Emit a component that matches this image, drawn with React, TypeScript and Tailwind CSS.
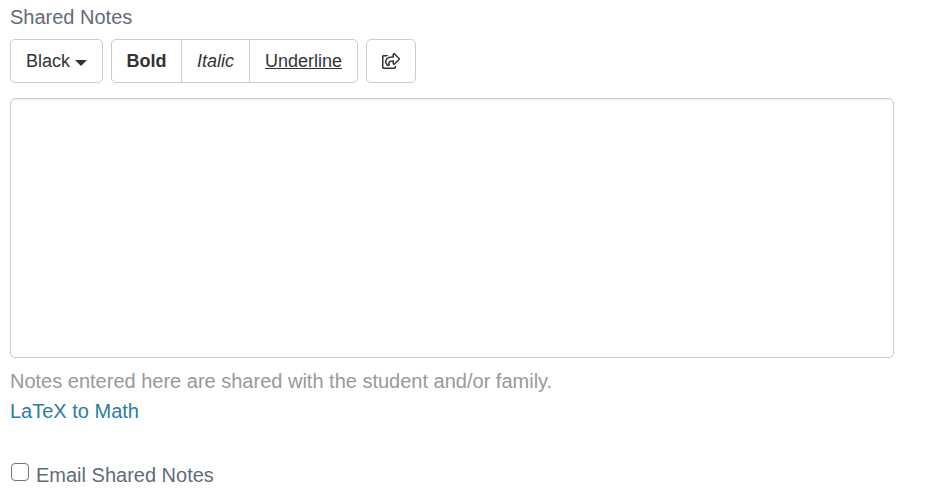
import { FaRegShareSquare } from 'react-icons/fa';

export default function App() {
  return (
    <div className="w-[937px] h-[500px] bg-white pl-[10px] overflow-hidden font-['Liberation_Sans',Arial,sans-serif]">
      <div className="h-[39px] pt-[4px] text-[20px] leading-[26px] text-[#5f6b7a]">Shared Notes</div>

      <div className="flex gap-2 text-[18px] leading-[24px] text-[#333333]">
        <button className="flex h-[44px] w-[93px] items-center justify-center gap-[5px] rounded-[5px] border border-[#cccccc] bg-white">
          Black
          <span className="mt-[3px] h-0 w-0 border-x-[6px] border-t-[6px] border-x-transparent border-t-[#333333]"></span>
        </button>
        <div className="flex h-[44px] w-[247px] rounded-[5px] border border-[#cccccc] bg-white">
          <button className="w-[70px] border-r border-[#cccccc] font-bold">Bold</button>
          <button className="w-[68px] border-r border-[#cccccc] italic">Italic</button>
          <button className="flex-1 underline">Underline</button>
        </div>
        <button className="flex h-[44px] w-[50px] items-center justify-center rounded-[5px] border border-[#cccccc] bg-white">
          <FaRegShareSquare size={18} />
        </button>
      </div>

      <textarea className="mt-[15px] block h-[260px] w-[884px] resize-none rounded-[5px] border border-[#cccccc] bg-white shadow-[inset_0_1px_1px_rgba(0,0,0,0.075)] outline-none"></textarea>

      <p className="mt-[10px] text-[20px] leading-[26px] text-[#999999]">Notes entered here are shared with the student and/or family.</p>
      <a className="mt-[4px] block text-[20px] leading-[26px] text-[#2a7ca8]">LaTeX to Math</a>

      <label className="mt-[38px] flex items-start text-[20px] leading-[26px] text-[#5f6b7a]">
        <input type="checkbox" className="ml-[1px] mt-[1px] h-[18px] w-[18px] appearance-none rounded-[4px] border border-[#767676] bg-white" />
        <span className="ml-[7px]">Email Shared Notes</span>
      </label>
    </div>
  );
}
